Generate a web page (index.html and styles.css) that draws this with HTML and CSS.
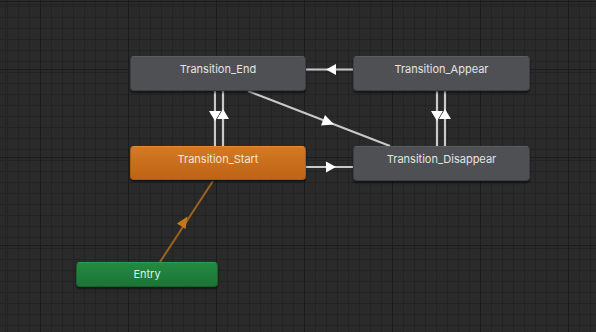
FILE: index.html
```html
<!DOCTYPE html>
<html lang="en">

<head>
    <meta charset="UTF-8">
    <meta name="viewport" content="width=device-width, initial-scale=1.0">
    <title>Animator</title>
    <link rel="stylesheet" href="styles.css">
</head>

<body>
    <div class="graf">
        <!-- overganger -->
        <svg class="linjer" width="596" height="332" viewBox="0 0 596 332">
            <g stroke="#c9c9c9" stroke-width="2.2" fill="none">
                <line x1="215" y1="91" x2="215" y2="146" />
                <line x1="223" y1="91" x2="223" y2="146" />
                <line x1="437" y1="91" x2="437" y2="146" />
                <line x1="445" y1="91" x2="445" y2="146" />
                <line x1="306" y1="69.5" x2="353" y2="69.5" />
                <line x1="306" y1="167" x2="353" y2="167" />
                <line x1="248" y1="91" x2="390" y2="146" />
            </g>
            <line x1="160" y1="262" x2="213" y2="181" stroke="#9a6420" stroke-width="2" />
            <g fill="#fff">
                <polygon points="209,111 221,111 215,121" />
                <polygon points="217,119 229,119 223,109" />
                <polygon points="431,111 443,111 437,121" />
                <polygon points="439,119 451,119 445,109" />
                <polygon points="326,69.5 336,64 336,75" />
                <polygon points="336,167 326,161.5 326,172.5" />
                <polygon points="334,124.5 321,125.5 325,115" />
            </g>
            <polygon points="187.5,216.5 185.5,229 177,223.5" fill="#c07a1a" />
        </svg>

        <div class="node" style="left:130px; top:56px; width:176px; height:35px;">Transition_End</div>
        <div class="node" style="left:353px; top:56px; width:177px; height:35px;">Transition_Appear</div>
        <div class="node start" style="left:130px; top:146px; width:176px; height:34px;">Transition_Start</div>
        <div class="node" style="left:353px; top:146px; width:177px; height:35px;">Transition_Disappear</div>
        <div class="node entry" style="left:76px; top:262px; width:142px; height:25px;">Entry</div>
    </div>
</body>

</html>
```
FILE: styles.css
```css
* {
    box-sizing: border-box;
}

body {
    margin: 0;
    background-color: #282828;
    font-family: Inter, "Noto Sans", sans-serif;
    overflow: hidden;
}

.graf {
    position: relative;
    width: 596px;
    height: 332px;
    background-color: #2a2a2a;
    background-image:
        repeating-linear-gradient(90deg, #1c1c1c 0 1px, transparent 1px 88px),
        repeating-linear-gradient(0deg, #1c1c1c 0 1px, transparent 1px 88px),
        repeating-linear-gradient(90deg, #232323 0 1px, transparent 1px 11px),
        repeating-linear-gradient(0deg, #232323 0 1px, transparent 1px 11px);
    background-position: 40px 2px, 40px 2px, 7px 5px, 7px 5px;
}

.linjer {
    position: absolute;
    left: 0;
    top: 0;
}

.node {
    position: absolute;
    display: flex;
    justify-content: center;
    align-items: flex-start;
    padding-top: 5px;
    font-size: 11px;
    color: #e4e4e4;
    background-color: #4f5054;
    border: 1px solid #3e3f42;
    border-top-color: #5c5d61;
    border-radius: 4px;
    box-shadow: 0 2px 2px rgba(0, 0, 0, 0.5);
}

.start {
    background: linear-gradient(#d27a24, #bf6314);
    border-color: #a95a14;
    border-top-color: #e08a34;
    color: #f3e6d8;
}

.entry {
    padding-top: 4px;
    background: linear-gradient(#238a42, #1c7436);
    border-color: #16602b;
    border-top-color: #2d9a4f;
    color: #dff0e2;
}
```
